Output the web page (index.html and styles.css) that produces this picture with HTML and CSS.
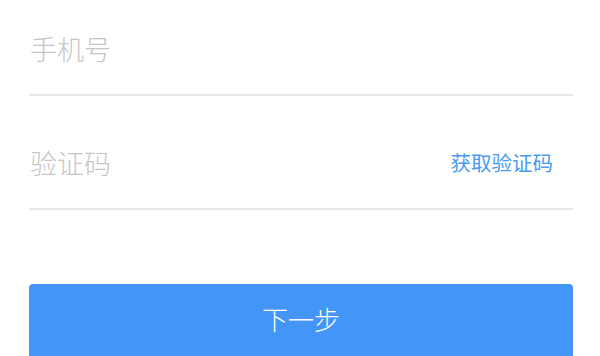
FILE: index.html
```html
<!DOCTYPE html>
<html lang="zh-CN">
<head>
<meta charset="utf-8">
<title>登录</title>
<link rel="stylesheet" href="styles.css">
</head>
<body>
<div class="form">
  <div class="row row-first">
    <span class="placeholder">手机号</span>
  </div>
  <div class="row row-second">
    <span class="placeholder">验证码</span>
    <span class="code-link">获取验证码</span>
  </div>
  <div class="btn">下一步</div>
</div>
</body>
</html>
```
FILE: styles.css
```css
html, body {
  margin: 0;
  padding: 0;
  background: #ffffff;
  font-family: "Noto Sans CJK SC", "Noto Sans", sans-serif;
}
.form {
  padding: 0 27px 0 29px;
}
.row {
  display: flex;
  align-items: center;
  justify-content: space-between;
  height: 90px;
  padding-bottom: 4px;
  box-sizing: border-box;
  border-bottom: 2px solid #e8e8e8;
}
.row-first {
  margin-top: 6px;
}
.row-second {
  margin-top: 24px;
}
.placeholder {
  font-size: 27px;
  font-weight: 300;
  color: #c6c6c6;
  padding-left: 1px;
}
.code-link {
  font-size: 20.5px;
  color: #4a9af3;
  margin-right: 20px;
}
.btn {
  margin-top: 74px;
  height: 80px;
  background: #4396f8;
  border-radius: 4px;
  color: #ffffff;
  font-size: 26px;
  font-weight: 300;
  display: flex;
  justify-content: center;
  align-items: flex-start;
  padding-top: 16px;
  box-sizing: border-box;
}
```
